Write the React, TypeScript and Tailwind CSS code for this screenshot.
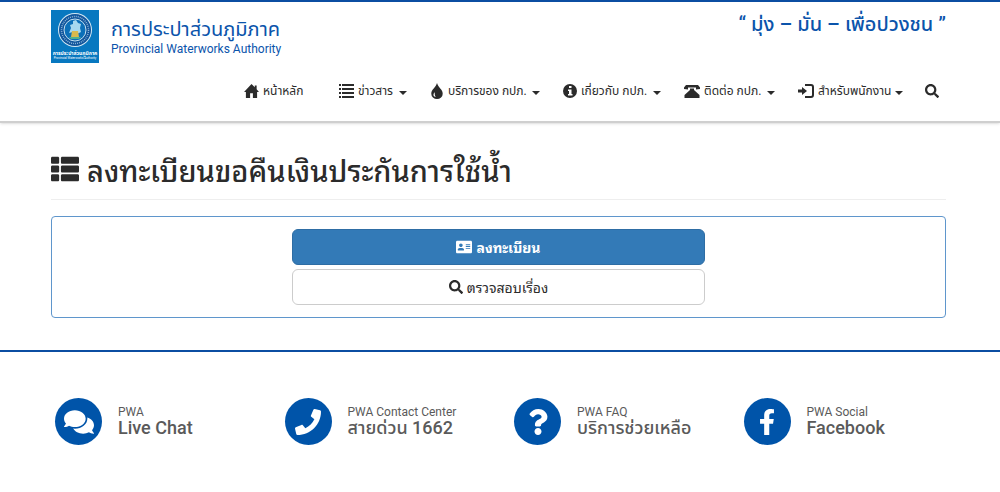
import type { ReactNode } from "react";
import { FaAddressCard, FaComments, FaFacebookF, FaPhone, FaQuestion, FaSearch, FaThList } from "react-icons/fa";

interface MenuItem {
  label: string;
  icon: ReactNode;
  dropdown: boolean;
  width: string;
}

interface Contact {
  title: string;
  detail: string;
  icon: ReactNode;
}

const menu: MenuItem[] = [
  { label: "หน้าหลัก", icon: <HomeIcon />, dropdown: false, width: "w-[58px]" },
  { label: "ข่าวสาร", icon: <ListIcon />, dropdown: true, width: "w-[68px]" },
  { label: "บริการของ กปภ.", icon: <DropIcon />, dropdown: true, width: "w-[110px]" },
  { label: "เกี่ยวกับ กปภ.", icon: <InfoIcon />, dropdown: true, width: "w-[98px]" },
  { label: "ติดต่อ กปภ.", icon: <TelephoneIcon />, dropdown: true, width: "w-[91px]" },
  { label: "สำหรับพนักงาน", icon: <LoginIcon />, dropdown: true, width: "w-[104px]" },
];

const contacts: Contact[] = [
  { title: "PWA", detail: "Live Chat", icon: <FaComments className="size-[30px]" /> },
  { title: "PWA Contact Center", detail: "สายด่วน 1662", icon: <FaPhone className="size-[26px]" /> },
  { title: "PWA FAQ", detail: "บริการช่วยเหลือ", icon: <FaQuestion className="size-[26px]" /> },
  { title: "PWA Social", detail: "Facebook", icon: <FaFacebookF className="size-[26px]" /> },
];

export default function App() {
  return (
    <div className="min-h-screen bg-white font-['Roboto','Noto_Sans_Thai','Noto_Sans',sans-serif] text-[#2b2b2b]">
      <header className="border-t-2 border-b-2 border-t-[#0b4ea2] border-b-[#cfcfcf] pt-2 pr-[54px] pb-5 pl-[51px] shadow-sm">
        <div className="flex items-start justify-between text-[#0b54ab]">
          <a href="#" className="flex items-center gap-3">
            <Logo />
            <span className="flex flex-col">
              <span className="text-xl leading-6">การประปาส่วนภูมิภาค</span>
              <span className="text-xs leading-4">Provincial Waterworks Authority</span>
            </span>
          </a>
          <p className="text-xl leading-7 font-medium">“ มุ่ง – มั่น – เพื่อปวงชน ”</p>
        </div>
        <nav className="mt-[18px] flex items-center justify-end gap-[23px] pr-[7px]">
          {menu.map(item => (
            <a key={item.label} href="#" className={`flex h-5 shrink-0 items-center gap-1 text-xs whitespace-nowrap first:mr-3.5 ${item.width}`}>
              {item.icon}
              <span>{item.label}</span>
              {item.dropdown && <Caret />}
            </a>
          ))}
          <button type="button" aria-label="ค้นหา"><FaSearch className="size-3.5" /></button>
        </nav>
      </header>

      <main className="pt-7 pr-[54px] pb-8 pl-[51px]">
        <h1 className="flex items-center gap-2 border-b border-[#eee] pb-3 font-['Noto_Sans_Thai_Looped','Loma','Garuda','Waree','Noto_Sans_Thai',sans-serif] text-[29px] leading-9 font-medium">
          <FaThList className="size-7" />
          ลงทะเบียนขอคืนเงินประกันการใช้น้ำ
        </h1>
        <div className="mt-4 rounded border border-[#5f96cc] px-2 py-3">
          <div className="mx-auto flex w-[47%] flex-col gap-1 font-['Noto_Sans_Thai_Looped','Loma','Garuda','Waree','Noto_Sans_Thai',sans-serif]">
            <button type="button" className="flex h-9 items-center justify-center gap-1 rounded-md border border-[#2e6da4] bg-[#337ab7] text-sm font-bold text-white">
              <FaAddressCard className="size-4" />
              ลงทะเบียน
            </button>
            <button type="button" className="flex h-9 items-center justify-center gap-1 rounded-md border border-[#ccc] bg-white text-sm">
              <FaSearch className="size-3.5" />
              ตรวจสอบเรื่อง
            </button>
          </div>
        </div>
      </main>

      <footer className="border-t-2 border-[#0b4ea2] pt-[46px] pr-[27px] pb-10 pl-[55px]">
        <div className="grid grid-cols-4">
          {contacts.map(contact => (
            <a key={contact.title} href="#" className="flex items-center gap-4 text-[#5a5a5a]">
              <span className="flex size-[47px] shrink-0 items-center justify-center rounded-full bg-[#0054a9] text-white">{contact.icon}</span>
              <span className="flex flex-col">
                <span className="text-xs leading-3">{contact.title}</span>
                <span className="text-lg leading-5 font-medium">{contact.detail}</span>
              </span>
            </a>
          ))}
        </div>
      </footer>
    </div>
  );
}

function Logo() {
  return (
    <svg viewBox="0 0 48 53" className="h-[53px] w-12">
      <rect width="48" height="53" fill="#0878c0" />
      <circle cx="24" cy="20" r="17" fill="#d4e8f4" />
      <circle cx="24" cy="20" r="16" fill="#10559c" />
      <circle cx="24" cy="20" r="13.500" fill="none" stroke="#8fb5d8" strokeWidth="1.500" strokeDasharray="1 1" />
      <circle cx="24" cy="20" r="11" fill="#0b6fb8" stroke="#c4dff0" strokeWidth="1" />
      <path d="M22 11l3-1 2 3 3 1-1 4 1 4-4 2-4-2-4 1 2-5-1-3 3-1z" fill="#a7d9ef" />
      <path d="M21 21h6l1 6h-8z" fill="#d8b94e" />
      <path d="M18 27h12l-2 2h-8z" fill="#4fb08f" />
      <text x="24" y="45" textAnchor="middle" fontSize="5" fontWeight="700" fill="#fff">การประปาส่วนภูมิภาค</text>
      <text x="24" y="49" textAnchor="middle" fontSize="3" fill="#fff">Provincial Waterworks Authority</text>
    </svg>
  );
}

function Caret() {
  return (
    <svg viewBox="0 0 8 4" className="mt-1 ml-auto h-1 w-2 shrink-0" fill="currentColor">
      <path d="M0 0h8L4 4z" />
    </svg>
  );
}

function HomeIcon() {
  return (
    <svg viewBox="0 0 16 15" className="h-3.5 w-[15px] shrink-0" fill="currentColor">
      <path d="M8 0 0 8.500h2V15h4.500v-5h3v5H14V8.500h2l-2.500-3V1.500h-2v2z" />
    </svg>
  );
}

function ListIcon() {
  return (
    <svg viewBox="0 0 15 14" className="h-3.5 w-[15px] shrink-0" fill="currentColor">
      <path d="M0 0h2v2H0zM3 0h12v2H3zM0 4h2v2H0zM3 4h12v2H3zM0 8h2v2H0zM3 8h12v2H3zM0 12h2v2H0zM3 12h12v2H3z" />
    </svg>
  );
}

function DropIcon() {
  return (
    <svg viewBox="0 0 12 14" className="h-4 w-3.5 shrink-0">
      <path d="M6 0C5 4 1 5.500 1 9.300a5 4.700 0 0 0 10 0C11 5.500 7 4 6 0z" fill="currentColor" />
      <path d="M4 8c-2 2-1 4 1 4-1-1-1-2-1-4z" fill="#fff" />
    </svg>
  );
}

function InfoIcon() {
  return (
    <svg viewBox="0 0 14 14" className="size-3.5 shrink-0">
      <circle cx="7" cy="7" r="7" fill="currentColor" />
      <path d="M6 2h2.500v2H6zM5 5.500h3.500V10h1v1.500H5V10h1V7H5z" fill="#fff" />
    </svg>
  );
}

function TelephoneIcon() {
  return (
    <svg viewBox="0 0 16 14" className="h-3.5 w-4 shrink-0" fill="currentColor">
      <path d="M2 1h12l2 2.500V5l-4 .5V3.500H4v2L0 5V3.500zM6 4.500h4v1.500l5.500 5V14H.5v-3L6 6z" />
    </svg>
  );
}

function LoginIcon() {
  return (
    <svg viewBox="0 0 16 14" className="h-3.5 w-4 shrink-0">
      <path d="M0 5.500h4V3l5 4-5 4V8.500H0z" fill="currentColor" />
      <path d="M7 1h6q2 0 2 2v8q0 2-2 2H7" fill="none" stroke="currentColor" strokeWidth="2" />
    </svg>
  );
}
